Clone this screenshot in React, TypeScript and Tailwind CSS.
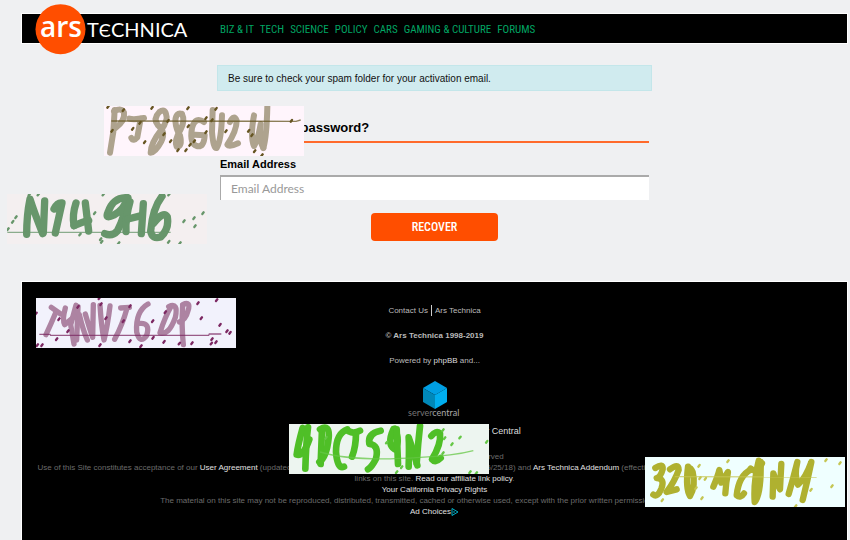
import type { ReactNode } from "react";

type Tile = {
  place: string;
  viewBox: string;
  background: string;
  ink: string;
  speck: string;
  brush: number;
  strokes: string[];
  line: string;
  specks: [number, number][];
};

const tiles: Tile[] = [
  {
    place: "left-[104px] top-[106px]",
    viewBox: "12 18 600 150",
    background: "#fff5fc",
    ink: "#aea38e",
    speck: "#665522",
    brush: 18,
    strokes: [
      "M44 30 L40 95 L30 158",
      "M42 34 Q66 22 72 38 Q76 62 46 84",
      "M88 56 Q102 60 132 54",
      "M122 56 L112 112 Q100 126 94 114",
      "M198 42 Q194 24 178 36 Q158 56 174 76 Q198 94 184 124 Q166 158 152 158 Q152 130 182 92 Q206 60 198 42",
      "M246 42 Q228 36 226 62 Q228 88 240 106 Q248 140 230 140 Q222 120 242 88 Q256 62 246 42",
      "M312 66 Q286 48 276 84 Q268 130 290 138 Q312 144 314 106 L286 104",
      "M338 30 L336 96 Q340 146 350 144 Q364 120 366 46",
      "M390 66 Q402 42 410 62 Q410 92 382 134 Q388 142 414 130",
      "M462 46 Q450 110 462 138 Q474 120 482 72 Q476 120 490 144",
      "M490 144 Q500 110 502 20",
    ],
    line: "M34 63 L588 64 L602 60",
    specks: [[24, 20], [70, 30], [156, 23], [264, 24], [348, 26], [318, 54], [36, 92], [98, 86], [120, 68], [134, 126], [192, 102], [204, 62], [212, 123], [234, 150], [258, 150], [270, 134], [283, 123], [265, 78], [318, 96], [336, 60], [378, 93], [446, 92], [456, 105], [464, 153], [486, 165], [574, 62]],
  },
  {
    place: "left-[7px] top-[194px]",
    viewBox: "21 27 600 150",
    background: "#f4eff0",
    ink: "#67966b",
    speck: "#67966b",
    brush: 22,
    strokes: [
      "M80 148 Q80 90 90 42 Q102 80 128 146",
      "M130 142 Q132 100 134 48",
      "M162 72 Q172 52 186 54 Q178 90 166 144",
      "M228 54 Q216 90 222 122",
      "M222 122 Q246 112 266 106",
      "M256 54 L266 138",
      "M376 38 Q338 40 324 82 Q314 104 342 90 Q372 74 384 38 Q374 96 352 138 Q336 156 314 146",
      "M390 50 Q376 98 378 140",
      "M384 102 L424 92",
      "M430 56 L424 146",
      "M486 34 Q458 70 452 138 Q456 164 482 156 Q508 132 502 96 Q490 76 460 116",
    ],
    line: "M22 142 L512 142",
    specks: [[24, 132], [38, 110], [48, 96], [88, 28], [115, 28], [240, 148], [256, 78], [284, 84], [310, 28], [302, 162], [305, 170], [356, 174], [507, 28], [506, 170], [540, 174], [552, 108], [582, 99], [585, 123], [609, 84]],
  },
  {
    place: "left-[36px] top-[298px]",
    viewBox: "18 24 600 150",
    background: "#f2f2fc",
    ink: "#ad83a2",
    speck: "#7c2862",
    brush: 16,
    strokes: [
      "M64 52 L92 72",
      "M78 66 Q62 104 48 134",
      "M106 54 Q96 90 104 104 L128 84",
      "M138 46 L122 104 L132 162",
      "M144 50 L140 150",
      "M148 74 Q160 124 172 150",
      "M166 72 Q180 120 188 142 L190 44",
      "M210 46 Q214 110 222 150 Q232 112 240 48",
      "M272 54 L298 52",
      "M290 58 Q278 102 254 148",
      "M354 42 Q316 64 320 126 Q330 164 350 136 Q362 98 330 100",
      "M424 48 Q404 82 390 128 Q416 138 436 82 Q446 36 416 50",
      "M458 46 Q454 108 460 164",
      "M458 44 Q484 32 474 62 Q468 88 448 96",
    ],
    line: "M28 133 L60 133 L62 136 L536 136 L538 132 L574 132",
    specks: [[18, 70], [22, 165], [36, 165], [80, 147], [87, 87], [114, 123], [144, 50], [208, 24], [213, 42], [228, 84], [210, 165], [300, 48], [280, 93], [300, 153], [333, 168], [368, 93], [369, 143], [402, 155], [406, 66], [448, 160], [486, 159], [504, 39], [514, 84], [560, 30], [570, 104], [591, 123], [600, 128], [546, 147], [558, 156], [544, 160]],
  },
  {
    place: "left-[289px] top-[424px]",
    viewBox: "27 162 600 150",
    background: "#edf5f0",
    ink: "#4fbf27",
    speck: "#65c746",
    brush: 20,
    strokes: [
      "M68 174 Q54 224 50 254 Q70 260 88 208",
      "M84 172 Q78 220 76 296",
      "M126 178 L122 282",
      "M120 178 Q150 160 146 204 Q140 262 118 276",
      "M202 178 Q168 190 168 246 Q172 298 192 290",
      "M206 184 Q222 192 240 182",
      "M228 188 Q228 230 216 260",
      "M302 182 Q262 190 268 222 Q298 224 288 266 Q276 290 264 298",
      "M340 178 Q320 222 344 238 Q362 214 344 176",
      "M350 178 L354 282",
      "M386 290 Q388 230 386 202 Q400 240 412 286",
      "M410 280 Q414 220 420 168",
      "M454 198 Q468 180 480 190 Q484 222 456 268 Q466 280 482 264",
    ],
    line: "M120 246 Q220 276 420 262 Q520 258 580 242",
    specks: [[138, 203], [320, 217], [365, 291], [489, 180], [489, 249], [516, 222], [540, 202], [570, 306], [589, 309], [620, 215], [350, 306], [494, 204]],
  },
  {
    place: "left-[645px] top-[457px]",
    viewBox: "15 21 600 150",
    background: "#efffff",
    ink: "#afb130",
    speck: "#c5c653",
    brush: 19,
    strokes: [
      "M46 54 Q70 38 68 58 Q62 82 50 84 Q76 86 64 116 Q52 144 40 134",
      "M90 58 Q116 38 116 60 Q104 94 80 126 L110 118",
      "M144 50 Q136 116 150 138 Q168 106 158 66 Q152 52 146 54",
      "M220 110 Q234 78 238 60 Q242 76 244 98 L264 66 Q258 98 256 130",
      "M334 58 Q296 76 290 136 Q302 146 312 130",
      "M332 56 Q350 72 366 40",
      "M356 32 Q340 96 344 156 Q364 132 362 36",
      "M398 140 L400 70 Q410 100 420 118 L424 42",
      "M446 132 Q460 84 472 36 Q462 76 474 104 Q496 86 514 36 Q502 94 488 150",
    ],
    line: "M104 80 L530 81",
    specks: [[264, 33], [177, 47], [196, 86], [186, 144], [67, 150], [513, 119], [467, 168], [558, 30], [600, 39], [576, 108], [180, 84], [168, 114]],
  },
];

function InkTile({ tile }: { tile: Tile }) {
  return (
    <svg
      aria-hidden="true"
      className={`absolute h-[50px] w-[200px] ${tile.place}`}
      viewBox={tile.viewBox}
      style={{ backgroundColor: tile.background }}
    >
      <g fill="none" stroke={tile.ink} strokeWidth={tile.brush} strokeLinecap="round" strokeLinejoin="round">
        {tile.strokes.map((d) => (
          <path key={d} d={d} />
        ))}
      </g>
      <path d={tile.line} fill="none" stroke={tile.speck} strokeWidth="4" opacity="0.75" />
      <g stroke={tile.speck} strokeWidth="7" strokeLinecap="round">
        {tile.specks.map(([x, y]) => (
          <line key={`${x}-${y}`} x1={x - 2} y1={y + 3} x2={x + 2} y2={y - 2} />
        ))}
      </g>
    </svg>
  );
}

const sections = ["Biz & IT", "Tech", "Science", "Policy", "Cars", "Gaming & Culture", "Forums"];

function Logo() {
  return (
    <a href="#home" aria-label="Ars Technica" className="-my-3 ml-3 block shrink-0">
      <svg width="156" height="54" viewBox="34 2 156 54">
        <circle cx="60.5" cy="29.2" r="25" fill="#ff4e00" />
        <g fill="#fff" fontFamily="'Open Sans', sans-serif">
          <text x="40" y="37" fontSize="28" fontWeight="600">ars</text>
          <text x="87" y="37" fontSize="20" fontFamily="Lato, 'Open Sans', sans-serif">
            T<tspan fontSize="18">Є</tspan>CHNICA
          </text>
        </g>
      </svg>
    </a>
  );
}

function Bright({ children }: { children: ReactNode }) {
  return <a href="#policy" className="text-[#e0e0e0]">{children}</a>;
}

export default function App() {
  return (
    <div className="relative min-h-screen overflow-hidden bg-[#eff0f2] pt-3.5 pr-[3px] pl-[22px] font-['Liberation_Sans',Arial,sans-serif] text-black">
      <header className="flex h-[29px] items-center bg-black shadow-[0_0_0_1px_#fff]">
        <Logo />
        <nav className="ml-[30px] flex gap-1.5 pt-[3px] font-['Roboto_Condensed','Liberation_Sans_Narrow',sans-serif] text-[11px] whitespace-nowrap text-[#00a563] uppercase">
          {sections.map((name) => (
            <a key={name} href="#section">{name}</a>
          ))}
        </nav>
      </header>

      <main className="mx-auto mt-[22px] w-[435px]">
        <p className="border border-[#c3e6ea] bg-[#d0ebef] px-2.5 pt-px text-[10px] leading-[23px] text-[#111]">
          Be sure to check your spam folder for your activation email.
        </p>
        <form className="px-[3px]" onSubmit={(e) => e.preventDefault()}>
          <h1 className="mt-[26px] border-b-2 border-[#ff6a2b] px-1 pb-0.5 text-[13px] leading-[22px] font-bold">Forgot your password?</h1>
          <label htmlFor="email" className="mt-[11px] block pb-px text-[11px] leading-5 font-bold">Email Address</label>
          <input
            id="email"
            type="email"
            placeholder="Email Address"
            className="block h-[25px] w-full border-t-2 border-l border-[#aaa] bg-white px-2.5 font-[Lato,sans-serif] text-[12px] outline-none placeholder:text-[#999]"
          />
          <button className="mx-auto mt-[13px] block h-7 w-[127px] rounded bg-[#ff4e00] font-['Roboto_Condensed','Liberation_Sans_Narrow',sans-serif] text-[12px] font-medium text-white uppercase">
            Recover
          </button>
        </form>
      </main>

      <footer className="mt-[41px] min-h-[260px] bg-black pt-[23px] text-center text-[8px] leading-[11px] text-[#bbb] shadow-[0_0_0_1px_#fff]">
        <p className="flex justify-center">
          <a href="#contact" className="pr-[3px]">Contact Us</a>
          <a href="#ars" className="border-l border-[#ccc] pl-[3px]">Ars Technica</a>
        </p>
        <p className="mt-3.5 font-bold">© Ars Technica 1998-2019</p>
        <p className="mt-3.5">Powered by <a href="#phpbb" className="text-[#ddd]">phpBB</a> and...</p>
        <svg className="mx-auto mt-[15px] block" width="56" height="38" viewBox="0 0 56 38" aria-label="servercentral">
          <path d="M28 0 L40 7 L28 14 L16 7Z" fill="#009fe3" />
          <path d="M16 7 L28 14 V28 L16 21Z" fill="#0088b8" />
          <path d="M40 7 L28 14 V28 L40 21Z" fill="#00aeef" />
          <text x="1" y="35" fontSize="9" fill="#777" fontFamily="Lato, sans-serif">
            server<tspan fill="#aaa">central</tspan>
          </text>
        </svg>
        <p className="mt-[7px] text-[9px]">Hosting and bandwidth from <a href="#host" className="text-[#ddd]">Server Central</a></p>
        <div className="mt-3.5 text-[#6b6b6b]">
          <p>© 2019 Condé Nast. All rights reserved</p>
          <p className="px-3.5">
            Use of this Site constitutes acceptance of our <Bright>User Agreement</Bright> (updated 5/25/18) and{" "}
            <Bright>Privacy Policy &amp; Cookie Notice</Bright> (updated 5/25/18) and{" "}
            <Bright>Ars Technica Addendum</Bright> (effective 5/25/18). Ars may earn commission on sales from links on this site.{" "}
            <Bright>Read our affiliate link policy</Bright>.
          </p>
          <p><Bright>Your California Privacy Rights</Bright></p>
          <p>The material on this site may not be reproduced, distributed, transmitted, cached or otherwise used, except with the prior written permission of Condé Nast.</p>
          <p className="flex items-center justify-center">
            <Bright>Ad Choices</Bright>
            <svg width="8" height="8" viewBox="0 0 8 8" fill="none" stroke="#00b0c8">
              <path d="M1 0.5 L7 4 L1 7.5Z M3 3 V5" />
            </svg>
          </p>
        </div>
      </footer>

      {tiles.map((tile) => (
        <InkTile key={tile.place} tile={tile} />
      ))}
    </div>
  );
}
